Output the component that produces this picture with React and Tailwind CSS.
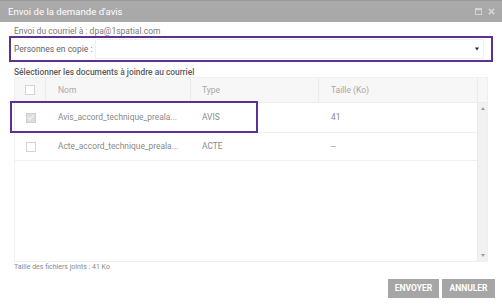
import React from 'react';

const docs = [
  { nom: 'Avis_accord_technique_preala...', type: 'AVIS', taille: '41', checked: true },
  { nom: 'Acte_accord_technique_preala...', type: 'ACTE', taille: '--', checked: false },
];

function Checkbox({ checked }) {
  return (
    <div className={`w-[10px] h-[10px] border flex items-center justify-center ${checked ? 'border-[#cfcfcf] bg-[#dedede]' : 'border-[#d4d4d4] bg-white'}`}>
      {checked && (
        <svg width="7" height="7" viewBox="0 0 8 8">
          <path d="M1 4.2 L3.2 6.2 L7 1.8" fill="none" stroke="#f4f4f4" strokeWidth="1.4" />
        </svg>
      )}
    </div>
  );
}

function App() {
  return (
    <div className="w-[502px] h-[306px] bg-white flex flex-col overflow-hidden" style={{ fontFamily: 'Roboto, "Liberation Sans", sans-serif' }}>
      <header className="h-[22px] bg-[#a9a9a9] border-t border-[#9c9c9c] flex items-center justify-between pl-[8px] pr-[7px] shrink-0">
        <h1 className="text-white text-[9.6px] leading-none">Envoi de la demande d'avis</h1>
        <div className="flex items-center gap-[6px]">
          <svg width="7" height="7" viewBox="0 0 8 8">
            <rect x="0.5" y="0.5" width="7" height="7" fill="none" stroke="#d6d6d6" strokeWidth="1" />
            <rect x="0.5" y="0.5" width="7" height="2" fill="#d6d6d6" />
          </svg>
          <svg width="7" height="7" viewBox="0 0 8 8">
            <path d="M1 1 L7 7 M7 1 L1 7" stroke="#d6d6d6" strokeWidth="1.8" />
          </svg>
        </div>
      </header>

      <main className="flex-1 flex flex-col px-[14px] pt-[5px]">
        <p className="text-[8.5px] text-[#7a7a7a] leading-[9px]">Envoi du courriel à : dpa@1spatial.com</p>

        <div className="-mx-[5px] h-[26px] border-2 border-[#5b3192] flex items-stretch pl-[3px] pr-[7px] py-[1px]">
          <span className="text-[8.5px] text-[#666] flex items-center pr-[3px]">Personnes en copie :</span>
          <div className="flex-1 border border-[#f0f0f0] flex items-center justify-end pr-[4px]">
            <svg width="4" height="4" viewBox="0 0 4 4">
              <path d="M0 0.5 H4 L2 3.5 Z" fill="#222" />
            </svg>
          </div>
        </div>

        <p className="mt-[5px] text-[8.4px] font-medium text-[#5a5a5a] leading-[10px]">Sélectionner les documents à joindre au courriel</p>

        <div className="relative w-[474px] h-[185px] border border-[#efefef] flex">
          <div className="flex-1 flex flex-col">
            <div className="h-[25px] bg-[#f7f7f7] border-b border-[#ececec] flex text-[8.5px] text-[#a8a8a8]">
              <div className="w-[31px] border-r border-[#ececec] flex items-center justify-center">
                <Checkbox checked={false} />
              </div>
              <div className="w-[145px] border-r border-[#ececec] flex items-center pl-[12px]">Nom</div>
              <div className="w-[128px] border-r border-[#ececec] flex items-center pl-[11px]">Type</div>
              <div className="flex-1 flex items-center pl-[12px]">Taille (Ko)</div>
            </div>
            {docs.map((d, i) => (
              <div key={d.nom} className={`${i === 0 ? 'h-[30px]' : 'h-[28px]'} border-b border-[#f0f0f0] flex text-[8.4px] text-[#8a8a8a]`}>
                <div className="w-[31px] flex items-center justify-center">
                  <Checkbox checked={d.checked} />
                </div>
                <div className="w-[145px] flex items-center pl-[12px]">{d.nom}</div>
                <div className="w-[128px] flex items-center pl-[11px]">{d.type}</div>
                <div className="flex-1 flex items-center pl-[12px]">{d.taille}</div>
              </div>
            ))}
          </div>
          <div className="w-[10px] flex flex-col border-l border-[#ececec]">
            <div className="h-[25px] bg-[#f7f7f7] border-b border-[#ececec]" />
            <div className="flex-1 bg-[#f1f1f1] flex flex-col items-center justify-between py-[4px]">
              <svg width="4" height="3" viewBox="0 0 4 3"><path d="M0 3 L2 0 L4 3 Z" fill="#a0a0a0" /></svg>
              <svg width="4" height="3" viewBox="0 0 4 3"><path d="M0 0 L2 3 L4 0 Z" fill="#a0a0a0" /></svg>
            </div>
          </div>
          <div className="absolute left-[-5px] top-[23px] w-[248px] h-[32px] border-2 border-[#5b3192] pointer-events-none" />
        </div>

        <p className="mt-[1px] text-[7px] text-[#8a8a8a] leading-[9px]">Taille des fichiers joints : 41 Ko</p>

        <div className="flex justify-end gap-[3px] mt-[7px] -mr-[7px]">
          <button className="h-[19px] w-[51px] bg-[#a6a6a6] text-white text-[8.5px] font-bold">ENVOYER</button>
          <button className="h-[19px] w-[53px] bg-[#a6a6a6] text-white text-[8.5px] font-bold">ANNULER</button>
        </div>
      </main>
    </div>
  );
}

export default App;
